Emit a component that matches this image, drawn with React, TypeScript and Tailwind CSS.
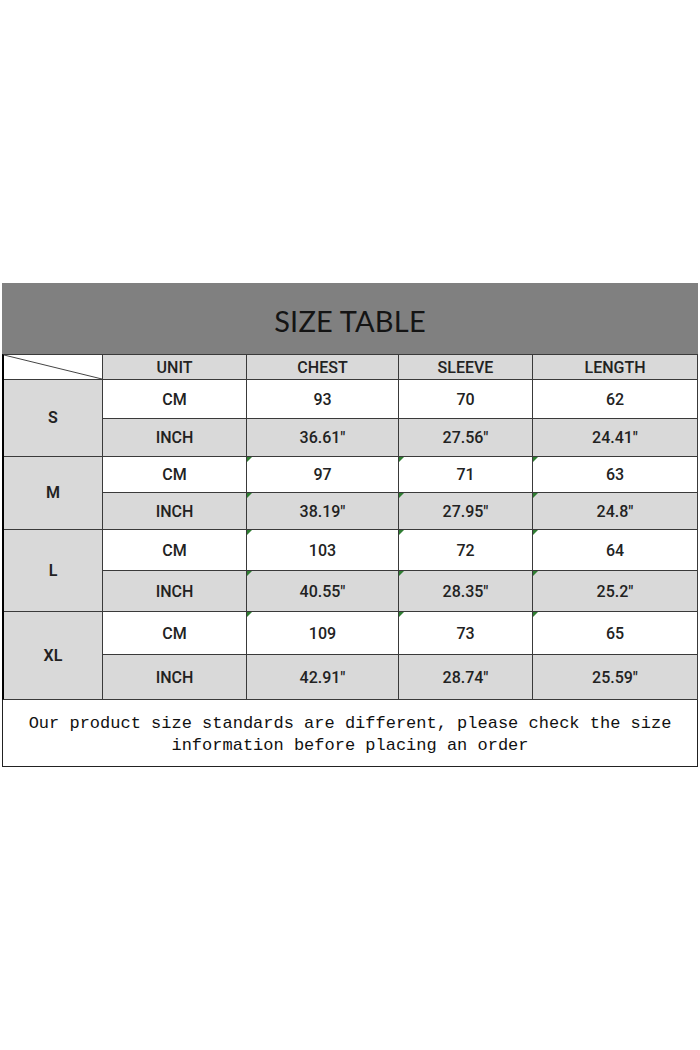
const sizes = [
  { size: "S", cm: ["93", "70", "62"], inch: ['36.61"', '27.56"', '24.41"'] },
  { size: "M", cm: ["97", "71", "63"], inch: ['38.19"', '27.95"', '24.8"'] },
  { size: "L", cm: ["103", "72", "64"], inch: ['40.55"', '28.35"', '25.2"'] },
  { size: "XL", cm: ["109", "73", "65"], inch: ['42.91"', '28.74"', '25.59"'] },
];

// rows that show the little green excel markers (size index + unit)
const flagged = ["M-cm", "M-inch", "L-cm", "L-inch", "XL-cm"];

function Cell({
  children,
  gray,
  flag,
}: {
  children: React.ReactNode;
  gray?: boolean;
  flag?: boolean;
}) {
  return (
    <div
      className={`relative flex items-center justify-center pt-px ${
        gray ? "bg-[#d9d9d9]" : "bg-white"
      }`}
    >
      {flag && (
        <span className="absolute left-0 top-0 h-0 w-0 border-t-[5px] border-r-[5px] border-t-[#2f7d32] border-r-transparent" />
      )}
      {children}
    </div>
  );
}

export default function App() {
  return (
    <div className="min-h-screen bg-white pt-[283px] font-['Roboto','Lato',sans-serif] text-[16px] font-medium text-[#222]">
      <div className="mx-[2px] w-[696px]">
        {/* Title */}
        <div className="flex h-[71px] items-center justify-center bg-[#808080]">
          <h1 className="pt-[5px] font-['Lato',sans-serif] text-[29px] font-normal tracking-[0.2px] text-[#141414]">
            SIZE TABLE
          </h1>
        </div>

        {/* Table */}
        <div className="grid grid-cols-[98px_143px_151px_133px_164px] grid-rows-[24px_38px_37px_35px_36px_40px_40px_42px_44px] gap-px border border-l-2 border-[#3a3a3a] border-l-black bg-[#3a3a3a]">
          <div className="relative bg-white">
            <svg className="absolute inset-0 h-full w-full" viewBox="0 0 98 24" preserveAspectRatio="none">
              <line x1="0" y1="0" x2="98" y2="24" stroke="#444" strokeWidth="1" />
            </svg>
          </div>
          <Cell gray>UNIT</Cell>
          <Cell gray>CHEST</Cell>
          <Cell gray>SLEEVE</Cell>
          <Cell gray>LENGTH</Cell>

          {sizes.map((s) => (
            <>
              <div key={s.size} className="row-span-2 flex items-center justify-center bg-[#d9d9d9] font-semibold">
                {s.size}
              </div>
              <Cell>CM</Cell>
              {s.cm.map((v, i) => (
                <Cell key={"c" + i} flag={flagged.includes(s.size + "-cm")}>
                  {v}
                </Cell>
              ))}
              <Cell gray>INCH</Cell>
              {s.inch.map((v, i) => (
                <Cell key={"i" + i} gray flag={flagged.includes(s.size + "-inch")}>
                  {v}
                </Cell>
              ))}
            </>
          ))}
        </div>

        {/* Note */}
        <div className="flex h-[67px] flex-col items-center justify-center border border-t-0 border-[#222] bg-white pt-[3px] font-['Liberation_Mono',monospace] text-[17px] font-normal leading-[22px] text-[#111]">
          <p>Our product size standards are different, please check the size</p>
          <p>information before placing an order</p>
        </div>
      </div>
    </div>
  );
}
